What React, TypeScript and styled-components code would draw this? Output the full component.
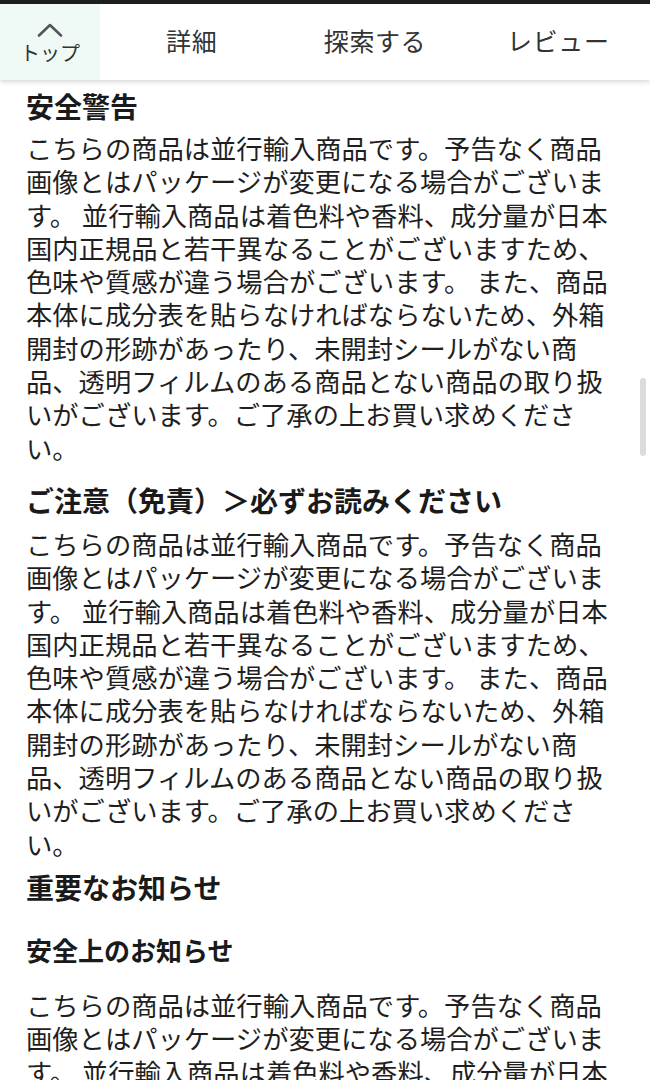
import styled, { createGlobalStyle } from "styled-components"

const GlobalStyle = createGlobalStyle`
    html, body {
        margin: 0;
        padding: 0;
        overflow: hidden;
        background: #fff;
    }
    body {
        font-family: "Noto Sans CJK JP", "Noto Sans", sans-serif;
        color: #1c1c1c;
    }
    * { box-sizing: border-box; }
`

const notice = "こちらの商品は並行輸入商品です。予告なく商品画像とはパッケージが変更になる場合がございます。 並行輸入商品は着色料や香料、成分量が日本国内正規品と若干異なることがございますため、色味や質感が違う場合がございます。 また、商品本体に成分表を貼らなければならないため、外箱開封の形跡があったり、未開封シールがない商品、透明フィルムのある商品とない商品の取り扱いがございます。ご了承の上お買い求めください。"

const tabs = ["詳細", "探索する", "レビュー"]

export default function App(){
    return(
        <Page>
            <GlobalStyle />
            <TopStrip />
            <Header>
                <TopTab>
                    <svg width="26" height="14" viewBox="0 0 26 14" xmlns="http://www.w3.org/2000/svg">
                        <path d="M2 12.5 13 2l11 10.5" stroke="#555" strokeWidth="2.6" fill="none" strokeLinecap="round" strokeLinejoin="round"/>
                    </svg>
                    <span>トップ</span>
                </TopTab>
                {tabs.map(t => <Tab key={t}>{t}</Tab>)}
            </Header>
            <Content>
                <Heading $top={6}>安全警告</Heading>
                <Paragraph $top={5}>{notice}</Paragraph>
                <Heading $top={16}>ご注意（免責）＞必ずお読みください</Heading>
                <Paragraph $top={7}>{notice}</Paragraph>
                <Heading $top={7}>重要なお知らせ</Heading>
                <SubHeading>安全上のお知らせ</SubHeading>
                <Paragraph $top={20}>{notice}</Paragraph>
            </Content>
            <ScrollThumb />
        </Page>
    )
}

const Page = styled.div`
    width: 650px;
    height: 1080px;
    overflow: hidden;
    background: #fff;
`

const TopStrip = styled.div`
    height: 4px;
    background: #1e1f22;
`

const Header = styled.nav`
    position: relative;
    z-index: 2;
    height: 76px;
    display: flex;
    background: #fff;
    box-shadow: 0 2px 5px rgba(0,0,0,0.16);
`

const TopTab = styled.div`
    width: 100px;
    flex: none;
    background: #effaf6;
    display: flex;
    flex-direction: column;
    align-items: center;
    padding-top: 19px;
    svg{ display: block; }
    span{
        margin-top: 4px;
        font-size: 20px;
        line-height: 24px;
        color: #333;
    }
`

const Tab = styled.div`
    flex: 1;
    display: flex;
    align-items: center;
    justify-content: center;
    padding-bottom: 4px;
    font-size: 25px;
    color: #333;
    letter-spacing: 0.6px;
`

const Content = styled.main`
    padding: 0 34px 0 26px;
`

const Heading = styled.h2<{ $top: number }>`
    margin: ${p => p.$top}px 0 0;
    font-size: 28px;
    line-height: 40px;
    font-weight: 700;
    color: #1a1a1a;
`

const SubHeading = styled.h3`
    margin: 25px 0 0;
    font-size: 26px;
    line-height: 36px;
    font-weight: 700;
    color: #1a1a1a;
`

const Paragraph = styled.p<{ $top: number }>`
    margin: ${p => p.$top}px 0 0;
    font-size: 26.3px;
    line-height: 33.3px;
    font-weight: 400;
    color: #1f1f1f;
`

const ScrollThumb = styled.div`
    position: fixed;
    right: 4px;
    top: 378px;
    width: 6px;
    height: 78px;
    border-radius: 3px;
    background: #dcdcdc;
`
